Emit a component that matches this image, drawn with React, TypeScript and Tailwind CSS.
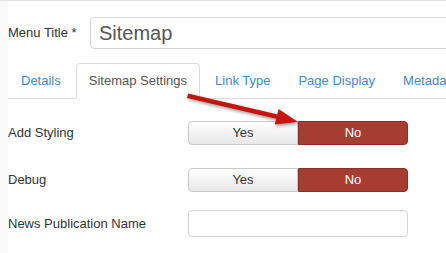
const font = { fontFamily: '"Liberation Sans", Arial, sans-serif' };

function Toggle() {
  return (
    <div className="flex h-[24px] w-[220px] text-[13px]">
      <div className="flex w-[110px] items-center justify-center rounded-l-[4px] border border-[#c8c8c8] bg-gradient-to-b from-white to-[#e8e8e8] text-[#333]">
        Yes
      </div>
      <div className="flex w-[110px] items-center justify-center rounded-r-[4px] border border-[#8e2e26] bg-[#a53d33] text-white">
        No
      </div>
    </div>
  );
}

function FieldRow({ label, children }: { label: string; children: React.ReactNode }) {
  return (
    <div className="flex items-center">
      <div className="w-[180px] text-[13px] text-[#333]">{label}</div>
      {children}
    </div>
  );
}

const tabs = ["Details", "Sitemap Settings", "Link Type", "Page Display", "Metadata"];

export default function App() {
  return (
    <div className="relative h-[253px] w-[446px] overflow-hidden bg-white" style={font}>
      <div className="h-px bg-[#e4e4e4]" />
      <div className="flex h-full">
        <div className="w-2 shrink-0 bg-[#fafafa]" />
        <div className="flex-1">
          <div className="mt-[16px] flex items-center">
            <div className="w-[82px] text-[13px] text-[#333]">Menu Title *</div>
            <div className="flex h-[32px] w-[400px] shrink-0 items-center rounded-[4px] border border-[#d4d4d4] px-[8px] text-[20px] text-[#555]">
              Sitemap
            </div>
          </div>

          <div className="mt-[14px] flex border-b border-[#dcdcdc]">
            {tabs.map((tab) => {
              const active = tab === "Sitemap Settings";
              return (
                <div
                  key={tab}
                  className={
                    active
                      ? "-mb-px mr-[2px] whitespace-nowrap rounded-t-[4px] border border-b-white border-[#dcdcdc] bg-white px-[12px] py-[8px] text-[13px] leading-[17px] text-[#555]"
                      : "mr-[2px] whitespace-nowrap border border-transparent px-[12px] py-[8px] text-[13px] leading-[17px] text-[#3a8ad6]"
                  }
                >
                  {tab}
                </div>
              );
            })}
          </div>

          <div className="mt-[22px] flex flex-col gap-[23px]">
            <FieldRow label="Add Styling">
              <Toggle />
            </FieldRow>
            <FieldRow label="Debug">
              <Toggle />
            </FieldRow>
            <div className="-mt-[5px]">
              <FieldRow label="News Publication Name">
                <div className="h-[27px] w-[220px] rounded-[4px] border border-[#d4d4d4]" />
              </FieldRow>
            </div>
          </div>
        </div>
      </div>

      <svg className="absolute left-0 top-0" width="446" height="253">
        <defs>
          <filter id="sh" x="-10%" y="-30%" width="120%" height="160%">
            <feDropShadow dx="1" dy="2" stdDeviation="1.5" floodColor="#000" floodOpacity="0.35" />
          </filter>
        </defs>
        <g filter="url(#sh)" fill="#c3160f">
          <path d="M188 93.5 L278 114.5 L277 119 L187 98 Z" />
          <polygon points="298,122 274.8,124.5 278.6,108.9" />
        </g>
      </svg>
    </div>
  );
}
